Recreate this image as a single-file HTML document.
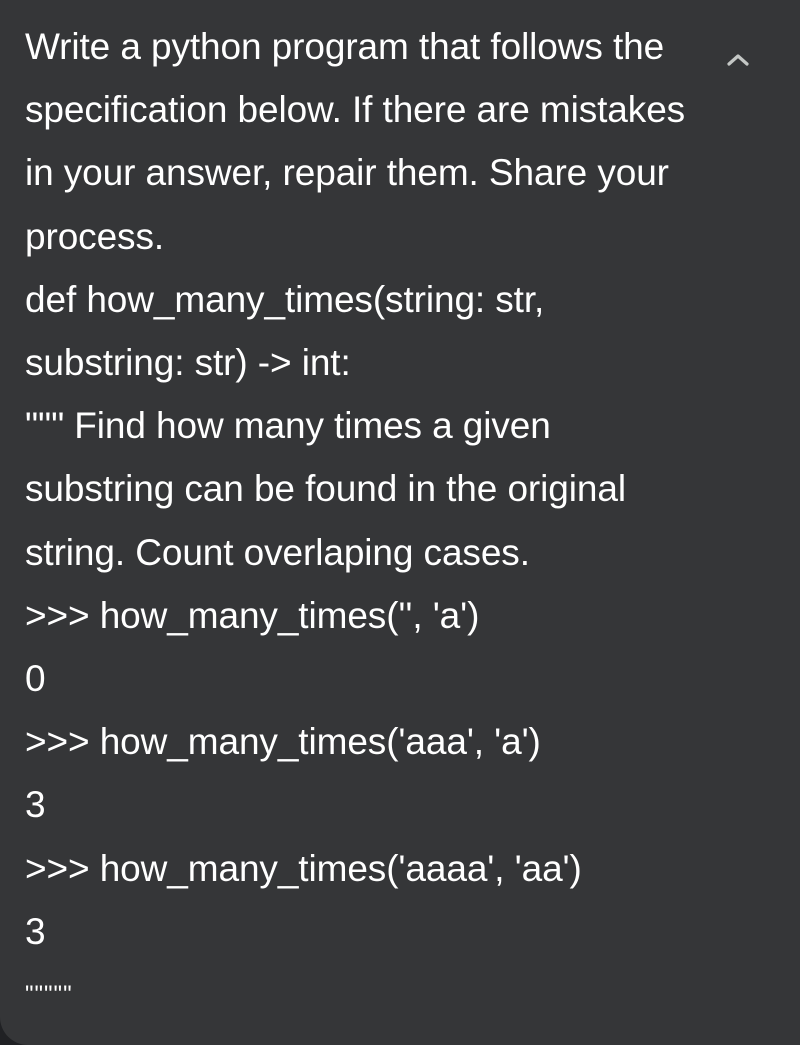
<!DOCTYPE html>
<html><head><style>
html,body{margin:0;padding:0;background:#202124;}
.c{position:relative;width:800px;height:1045px;background:#353638;border-radius:0 0 0 28px;overflow:hidden;}
.t{position:absolute;left:25px;top:15px;width:700px;font-family:"Liberation Sans",Arial,sans-serif;font-size:37px;line-height:63.2px;color:#ffffff;letter-spacing:-0.1px;}
.t div{white-space:nowrap;}
.q{font-size:24px;letter-spacing:1px;}
svg{position:absolute;left:726px;top:52px;}
</style></head><body><div class="c">
<svg width="24" height="16" viewBox="0 0 24 16"><path d="M3 12 L12 4 L21 12" fill="none" stroke="#c4c7c5" stroke-width="3.2" stroke-linecap="round" stroke-linejoin="round"/></svg>
<div class="t">
<div>Write a python program that follows the</div>
<div>specification below. If there are mistakes</div>
<div>in your answer, repair them. Share your</div>
<div>process.</div>
<div>def how_many_times(string: str,</div>
<div>substring: str) -&gt; int:</div>
<div>""" Find how many times a given</div>
<div>substring can be found in the original</div>
<div>string. Count overlaping cases.</div>
<div>&gt;&gt;&gt; how_many_times('', 'a')</div>
<div>0</div>
<div>&gt;&gt;&gt; how_many_times('aaa', 'a')</div>
<div>3</div>
<div>&gt;&gt;&gt; how_many_times('aaaa', 'aa')</div>
<div>3</div>
<div class="q">"""""</div>
</div>
</div></body></html>
